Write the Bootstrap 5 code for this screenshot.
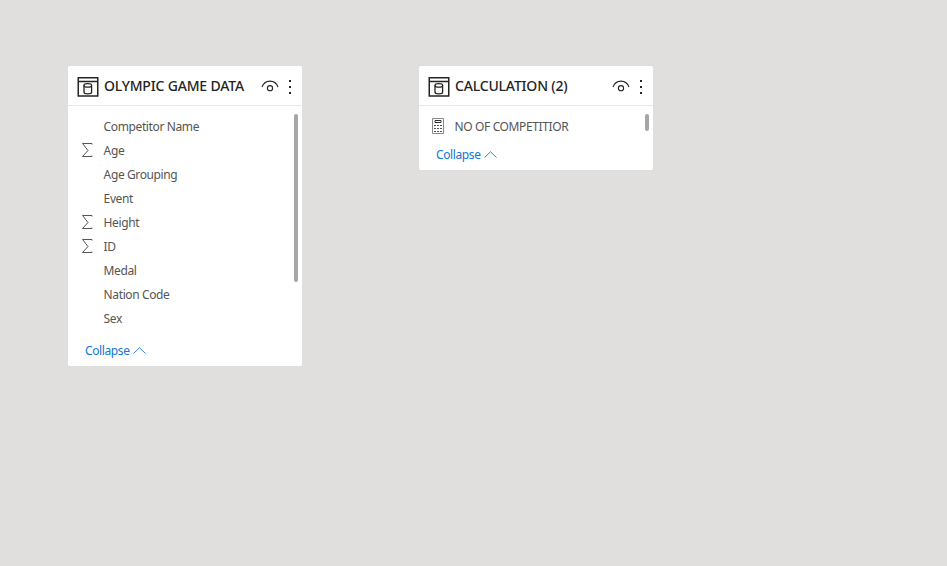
<!DOCTYPE html>
<html lang="en">
<head>
<meta charset="utf-8">
<meta name="viewport" content="width=device-width, initial-scale=1">
<title>Model view</title>
<link href="https://cdn.jsdelivr.net/npm/bootstrap@5.3.0/dist/css/bootstrap.min.css" rel="stylesheet">
<style>
body{background:#e0dfdd;font-family:"Noto Sans","Open Sans",sans-serif;font-size:12px;color:#555;min-height:100vh;overflow:hidden}
.canvas{padding:66px 68px;column-gap:117px}
.table-card{width:234px;border-radius:2px;--bs-card-border-width:0;--bs-card-border-radius:2px;color:#555}
.table-head{height:40px;border-bottom:1px solid #e6e6e6;padding:0 11px 0 9px;color:#252423}
.table-icon{margin-top:2px}
.table-title{font-size:14px;font-weight:500;line-height:20px;margin-left:5px;letter-spacing:-.18px;white-space:nowrap}
.more-icon{margin:2px 0 0 10px}
.fields{padding-top:9px}
.field{height:24px;line-height:24px;letter-spacing:-.38px;white-space:nowrap}
.field-icon{width:35.6px;flex:none;padding-left:13px}
.sum-icon{margin-top:-2px}
.calc-icon{margin-top:-2px}
.thumb{width:4px;border-radius:2px;background:#a6a6a6;margin:8px 4px 0 0}
.thumb-long{height:168px}
.thumb-short{height:17px}
.collapse-link{height:30px;padding:0 0 0 17px;color:#0f78d4;letter-spacing:-.38px;text-decoration:none;line-height:30px}
.gap-long{margin-top:5px}
.gap-short{margin-top:1px}
.chevron{margin:-2px 0 0 3px}
svg{display:block;fill:none;stroke:currentColor;flex:none}
</style>
</head>
<body>
<svg width="0" height="0" class="position-absolute" aria-hidden="true">
  <symbol id="i-table" viewBox="0 0 22 20"><path d="M1.25.8h19.5v18.2H1.25zM1 4.5h20" stroke-width="1.5"/><path d="M7 8.3v6.9c0 2.1 7.6 2.1 7.6 0V8.3" stroke-width="1.3"/><ellipse cx="10.8" cy="8.4" rx="3.8" ry="1.7" stroke-width="1.2"/></symbol>
  <symbol id="i-eye" viewBox="0 0 18 12"><path d="M1 7C2.5 3 5.3 1.1 9 1.1S15.5 3 17 7" stroke-width="1.1"/><circle cx="9" cy="8.2" r="2.6" stroke-width="1.1"/></symbol>
  <symbol id="i-more" viewBox="0 0 2 14"><path d="M0 0h2v2H0zM0 6h2v2H0zM0 12h2v2H0z" fill="currentColor" stroke="none"/></symbol>
  <symbol id="i-sum" viewBox="0 0 12 15"><path d="M11 1.5V.5H1.5l5.5 7-5.500 6H11v-1" stroke-width="1"/></symbol>
  <symbol id="i-up" viewBox="0 0 13 7"><path d="M.5 6.5l6-5.700 6 5.700" stroke-width=".9"/></symbol>
  <symbol id="i-calc" viewBox="0 0 12 16"><path d="M.5.5h11v15H.5z" stroke="#8a8a8a"/><path d="M3 2.500h6v2H3z" stroke="#333"/><path d="M2 7.500h8M2 10.500h8M2 13.500h8" stroke-width="1" stroke-dasharray="2 1"/></symbol>
</svg>
<main class="canvas d-flex align-items-start">
  <section class="card table-card">
    <header class="table-head d-flex align-items-center">
      <svg width="22" height="20" class="table-icon"><use href="#i-table"/></svg>
      <span class="table-title">OLYMPIC GAME DATA</span>
      <svg width="18" height="12" class="ms-auto"><use href="#i-eye"/></svg>
      <svg width="2" height="14" class="more-icon"><use href="#i-more"/></svg>
    </header>
    <div class="d-flex justify-content-between">
      <ul class="fields list-unstyled mb-0">
        <li class="field d-flex align-items-center"><span class="field-icon"></span><span>Competitor Name</span></li>
        <li class="field d-flex align-items-center"><span class="field-icon"><svg width="12" height="15" class="sum-icon"><use href="#i-sum"/></svg></span><span>Age</span></li>
        <li class="field d-flex align-items-center"><span class="field-icon"></span><span>Age Grouping</span></li>
        <li class="field d-flex align-items-center"><span class="field-icon"></span><span>Event</span></li>
        <li class="field d-flex align-items-center"><span class="field-icon"><svg width="12" height="15" class="sum-icon"><use href="#i-sum"/></svg></span><span>Height</span></li>
        <li class="field d-flex align-items-center"><span class="field-icon"><svg width="12" height="15" class="sum-icon"><use href="#i-sum"/></svg></span><span>ID</span></li>
        <li class="field d-flex align-items-center"><span class="field-icon"></span><span>Medal</span></li>
        <li class="field d-flex align-items-center"><span class="field-icon"></span><span>Nation Code</span></li>
        <li class="field d-flex align-items-center"><span class="field-icon"></span><span>Sex</span></li>
      </ul>
      <div class="thumb thumb-long"></div>
    </div>
    <a href="#" class="collapse-link gap-long d-flex align-items-center">Collapse<svg width="13" height="7" class="chevron"><use href="#i-up"/></svg></a>
  </section>
  <section class="card table-card">
    <header class="table-head d-flex align-items-center">
      <svg width="22" height="20" class="table-icon"><use href="#i-table"/></svg>
      <span class="table-title">CALCULATION (2)</span>
      <svg width="18" height="12" class="ms-auto"><use href="#i-eye"/></svg>
      <svg width="2" height="14" class="more-icon"><use href="#i-more"/></svg>
    </header>
    <div class="d-flex justify-content-between">
      <ul class="fields list-unstyled mb-0">
        <li class="field d-flex align-items-center"><span class="field-icon"><svg width="12" height="16" class="calc-icon"><use href="#i-calc"/></svg></span><span>NO OF COMPETITIOR</span></li>
      </ul>
      <div class="thumb thumb-short"></div>
    </div>
    <a href="#" class="collapse-link gap-short d-flex align-items-center">Collapse<svg width="13" height="7" class="chevron"><use href="#i-up"/></svg></a>
  </section>
</main>
<script src="https://cdn.jsdelivr.net/npm/bootstrap@5.3.0/dist/js/bootstrap.bundle.min.js"></script>
</body>
</html>
